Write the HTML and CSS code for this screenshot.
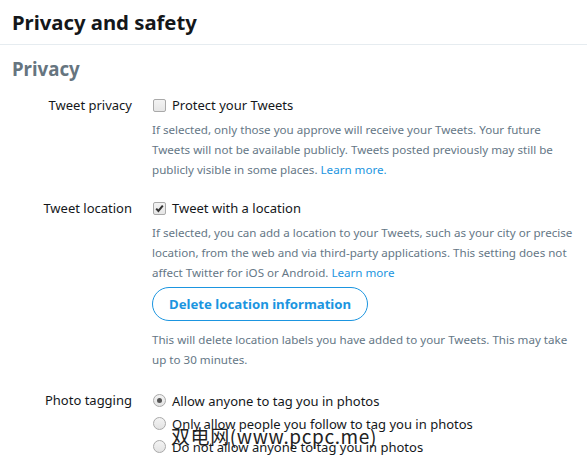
FILE: index.html
```html
<!DOCTYPE html>
<html>
<head>
<meta charset="utf-8">
<link rel="stylesheet" href="styles.css">
</head>
<body>
<div class="page">
  <header class="header"><h1 class="title">Privacy and safety</h1></header>
  <section class="section">
    <h2 class="subtitle">Privacy</h2>

    <div class="row">
      <div class="label">Tweet privacy</div>
      <div class="control">
        <label class="option"><span class="checkbox"></span>Protect your Tweets</label>
        <p class="desc">If selected, only those you approve will receive your Tweets. Your future Tweets will not be available publicly. Tweets posted previously may still be publicly visible in some places. <a class="link">Learn more.</a></p>
      </div>
    </div>

    <div class="row">
      <div class="label">Tweet location</div>
      <div class="control">
        <label class="option"><span class="checkbox checked"><svg viewBox="0 0 13 13" width="13" height="13"><path d="M3.2 6.6 L5.4 9 L9.8 3.6" fill="none" stroke="#333" stroke-width="2"/></svg></span>Tweet with a location</label>
        <p class="desc">If selected, you can add a location to your Tweets, such as your city or precise location, from the web and via third-party applications. This setting does not affect Twitter for iOS or Android. <a class="link">Learn more</a></p>
        <button class="btn">Delete location information</button>
        <p class="desc">This will delete location labels you have added to your Tweets. This may take up to 30 minutes.</p>
      </div>
    </div>

    <div class="row row-last">
      <div class="label">Photo tagging</div>
      <div class="control radios">
        <label class="option"><span class="radio on"></span>Allow anyone to tag you in photos</label>
        <label class="option"><span class="radio"></span>Only allow people you follow to tag you in photos</label>
        <label class="option"><span class="radio"></span>Do not allow anyone to tag you in photos</label>
      </div>
    </div>
  </section>
  <div class="watermark">双电网(www.pcpc.me)</div>
</div>
</body>
</html>
```
FILE: styles.css
```css
html, body { margin: 0; padding: 0; background: #fff; }
body { font-family: "Noto Sans", "Open Sans", sans-serif; color: #14171a; width: 587px; height: 460px; overflow: hidden; }
.page { position: relative; }
.header { border-bottom: 1px solid #e6ecf0; padding: 7px 12px 0; height: 37px; box-sizing: content-box; }
.title { margin: 0; font-size: 20.3px; font-weight: 700; line-height: 30px; color: #14171a; }
.section { padding: 0 12px; }
.subtitle { margin: 11px 0 0; font-size: 18.7px; font-weight: 700; color: #66757f; line-height: 26px; }
.row { display: flex; margin-top: 12px; }
.row + .row { margin-top: 17px; }
.row + .row-last { margin-top: 19px; }
.label { width: 120px; text-align: right; font-size: 13px; line-height: 22px; flex: none; color: #14171a; }
.control { margin-left: 20px; flex: 1; }
.option { display: flex; align-items: center; font-size: 13px; line-height: 22px; height: 22px; }
.checkbox { width: 11px; height: 11px; border: 1px solid #a9a9a9; border-radius: 2px; background: linear-gradient(#f3f3f3, #e6e6e6); margin: 0 6px 0 1px; display: inline-flex; flex: none; position: relative; }
.checkbox svg { position: absolute; left: -1px; top: -1px; }
.desc { margin: 4px 0 0; font-size: 11.6px; line-height: 20px; color: #657786; }
.link { color: #1b95e0; text-decoration: none; }
.btn { margin-top: 4px; height: 34px; padding: 0 16px; border: 1px solid #1b95e0; border-radius: 100px; background: #fff; color: #1b95e0; font-family: inherit; font-size: 13.2px; font-weight: 700; display: block; }
.btn + .desc { margin-top: 9px; }
.radios .option { height: 23px; }
.radio { width: 11px; height: 11px; border: 1px solid #a9a9a9; border-radius: 50%; background: linear-gradient(#f3f3f3, #e3e3e3); margin: 0 6px 0 1px; flex: none; display: inline-flex; align-items: center; justify-content: center; }
.radio.on::after { content: ""; width: 5px; height: 5px; border-radius: 50%; background: #555; }
.watermark { position: absolute; left: 171px; top: 424px; font-family: "Noto Sans CJK SC", sans-serif; font-size: 19px; color: #222; line-height: 24px; letter-spacing: 0.6px; }
```
